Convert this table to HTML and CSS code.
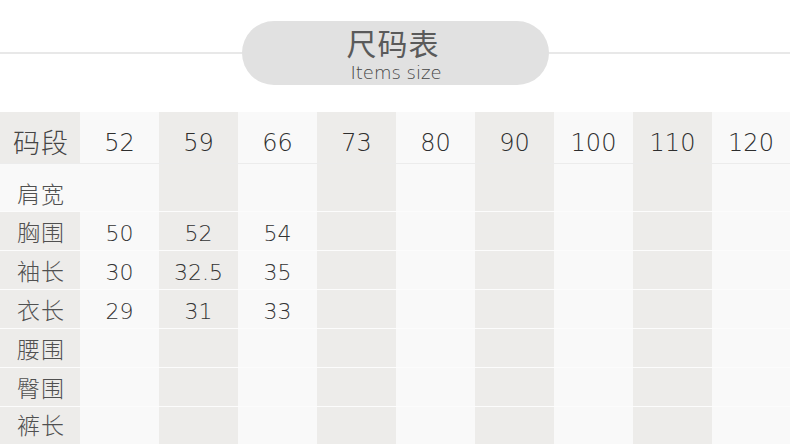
FILE: index.html
```html
<!DOCTYPE html>
<html lang="zh-CN">
<head>
<meta charset="utf-8">
<title>尺码表</title>
<link rel="stylesheet" href="styles.css">
</head>
<body>
<div class="page">
  <header class="title-bar">
    <div class="rule"></div>
    <div class="pill">
      <div class="title-cn">尺码表</div>
      <div class="title-en">Items size</div>
    </div>
    <div class="rule"></div>
  </header>

  <div class="size-table">
    <div class="row head">
      <div class="cell g label">码段</div>
      <div class="cell l">52</div>
      <div class="cell g">59</div>
      <div class="cell l">66</div>
      <div class="cell g">73</div>
      <div class="cell l">80</div>
      <div class="cell g">90</div>
      <div class="cell l">100</div>
      <div class="cell g">110</div>
      <div class="cell l">120</div>
    </div>
    <div class="row first">
      <div class="cell l label">肩宽</div>
      <div class="cell l"></div><div class="cell g"></div><div class="cell l"></div><div class="cell g"></div>
      <div class="cell l"></div><div class="cell g"></div><div class="cell l"></div><div class="cell g"></div><div class="cell l"></div>
    </div>
    <div class="row">
      <div class="cell g label">胸围</div>
      <div class="cell l">50</div><div class="cell g">52</div><div class="cell l">54</div><div class="cell g"></div>
      <div class="cell l"></div><div class="cell g"></div><div class="cell l"></div><div class="cell g"></div><div class="cell l"></div>
    </div>
    <div class="row">
      <div class="cell g label">袖长</div>
      <div class="cell l">30</div><div class="cell g">32.5</div><div class="cell l">35</div><div class="cell g"></div>
      <div class="cell l"></div><div class="cell g"></div><div class="cell l"></div><div class="cell g"></div><div class="cell l"></div>
    </div>
    <div class="row">
      <div class="cell g label">衣长</div>
      <div class="cell l">29</div><div class="cell g">31</div><div class="cell l">33</div><div class="cell g"></div>
      <div class="cell l"></div><div class="cell g"></div><div class="cell l"></div><div class="cell g"></div><div class="cell l"></div>
    </div>
    <div class="row">
      <div class="cell g label">腰围</div>
      <div class="cell l"></div><div class="cell g"></div><div class="cell l"></div><div class="cell g"></div>
      <div class="cell l"></div><div class="cell g"></div><div class="cell l"></div><div class="cell g"></div><div class="cell l"></div>
    </div>
    <div class="row">
      <div class="cell g label">臀围</div>
      <div class="cell l"></div><div class="cell g"></div><div class="cell l"></div><div class="cell g"></div>
      <div class="cell l"></div><div class="cell g"></div><div class="cell l"></div><div class="cell g"></div><div class="cell l"></div>
    </div>
    <div class="row last">
      <div class="cell g label">裤长</div>
      <div class="cell l"></div><div class="cell g"></div><div class="cell l"></div><div class="cell g"></div>
      <div class="cell l"></div><div class="cell g"></div><div class="cell l"></div><div class="cell g"></div><div class="cell l"></div>
    </div>
  </div>
</div>
</body>
</html>
```

FILE: styles.css
```css
* { box-sizing: border-box; }
html, body {
  margin: 0;
  padding: 0;
  background: #ffffff;
}
body {
  width: 790px;
  height: 444px;
  overflow: hidden;
  font-family: "DejaVu Sans", "Noto Sans CJK SC", sans-serif;
  color: #3a3a3a;
}
.page {
  display: flex;
  flex-direction: column;
}

/* Title */
.title-bar {
  display: flex;
  align-items: center;
  height: 112px;
  padding-bottom: 6px;
}
.rule {
  flex: 1;
  height: 2px;
  background: #e8e8e8;
}
.pill {
  width: 307px;
  height: 64px;
  border-radius: 32px;
  background: #e1e1e1;
  display: flex;
  flex-direction: column;
  align-items: center;
  padding-top: 3px;
  padding-left: 2px;
}
.title-cn {
  font-family: "Noto Sans CJK SC", sans-serif;
  font-size: 30px;
  line-height: 36px;
  font-weight: 400;
  color: #5a5a5a;
  letter-spacing: 1px;
  margin-right: 6px;
}
.title-en {
  font-family: "DejaVu Sans", sans-serif;
  font-size: 18px;
  line-height: 20px;
  margin-top: 3px;
  font-weight: 200;
  color: #444444;
}

/* Table */
.size-table {
  display: flex;
  flex-direction: column;
}
.row {
  display: grid;
  grid-template-columns: 80px repeat(8, 79px) 78px;
  height: 39px;
  border-top: 1px solid #fcfcfc;
}
.row.head {
  height: 52px;
  border-top: 0;
  border-bottom: 1px solid #ececec;
}
.row.first {
  height: 47px;
  border-top: 0;
}
.row.last {
  height: 38px;
}
.cell {
  display: flex;
  align-items: center;
  justify-content: center;
  font-size: 22px;
  font-weight: 200;
  padding-top: 5px;
  color: #333333;
}
.cell.g { background: #edecea; }
.cell.l { background: #f9f9f9; }
.head .cell {
  font-size: 24px;
  padding-top: 10px;
  color: #2e2e2e;
}
.first .cell {
  padding-top: 15px;
}
.label {
  font-family: "Noto Sans CJK SC", sans-serif;
  font-size: 23px;
  font-weight: 300;
  color: #505050;
  letter-spacing: 1px;
  padding-left: 2px;
  padding-top: 0;
}
.head .label {
  font-size: 27px;
  padding-top: 7px;
  color: #454545;
}
.first .label {
  padding-top: 10px;
}
.last .label {
  padding-bottom: 5px;
}
```
